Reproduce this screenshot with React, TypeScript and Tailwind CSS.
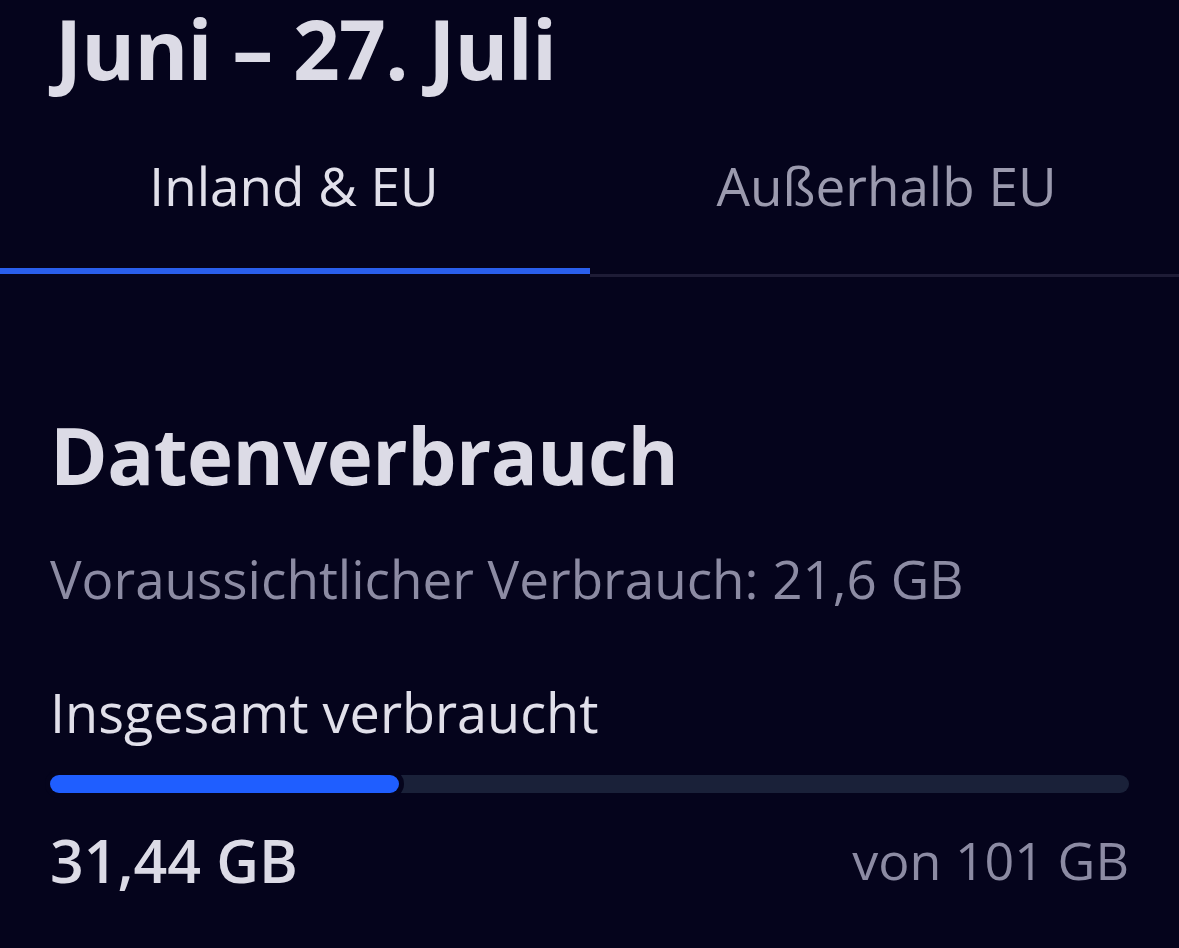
import React from 'react';

const font = { fontFamily: "'Open Sans', 'Noto Sans', sans-serif" };

export default function App() {
  return (
    <div className="w-[1179px] h-[948px] overflow-hidden bg-[#05041c] text-[#dcdbe6]" style={font}>
      {/* Period header */}
      <div className="h-[96px] flex items-center pl-[55px] pr-[50px]">
        <h1 className="text-[82px] font-bold leading-none tracking-[-0.8px]">Juni – 27. Juli</h1>
      </div>

      {/* Tabs */}
      <div className="flex mt-[6px]">
        <div className="w-[590px] flex flex-col">
          <div className="h-[166px] flex items-center justify-center pr-[2px]">
            <span className="text-[53px] font-medium leading-none text-[#e1e0ea]">Inland &amp; EU</span>
          </div>
          <div className="h-[6px] bg-[#2a5fec]" />
          <div className="h-[3px]" />
        </div>
        <div className="flex-1 flex flex-col">
          <div className="h-[166px] flex items-center justify-center pl-[4px]">
            <span className="text-[53px] font-medium leading-none text-[#9b9aae]">Außerhalb EU</span>
          </div>
          <div className="h-[6px]" />
          <div className="h-[3px] bg-[#1e1c36]" />
        </div>
      </div>

      {/* Usage */}
      <div className="px-[50px] flex flex-col">
        <div className="mt-[133px] h-[90px] flex items-center">
          <h2 className="text-[78px] font-bold leading-none tracking-[-0.6px]">Datenverbrauch</h2>
        </div>
        <div className="mt-[48px] h-[60px] flex items-center">
          <p className="text-[53px] leading-none text-[#8c8ba3]">Voraussichtlicher Verbrauch: 21,6 GB</p>
        </div>
        <div className="mt-[74px] h-[60px] flex items-center">
          <p className="text-[54px] leading-none text-[#e1e0ea]">Insgesamt verbraucht</p>
        </div>
        <div className="mt-[33px] h-[18px] rounded-full bg-[#1a2139] flex">
          <div className="w-[349px] h-full rounded-full bg-[#1f5eff] ring-[5px] ring-[#05041c]" />
        </div>
        <div className="mt-[32px] h-[70px] flex items-center justify-between">
          <span className="text-[59px] font-semibold leading-none">31,44 GB</span>
          <span className="text-[52px] leading-none text-[#8c8ba3]">von 101 GB</span>
        </div>
      </div>
    </div>
  );
}
